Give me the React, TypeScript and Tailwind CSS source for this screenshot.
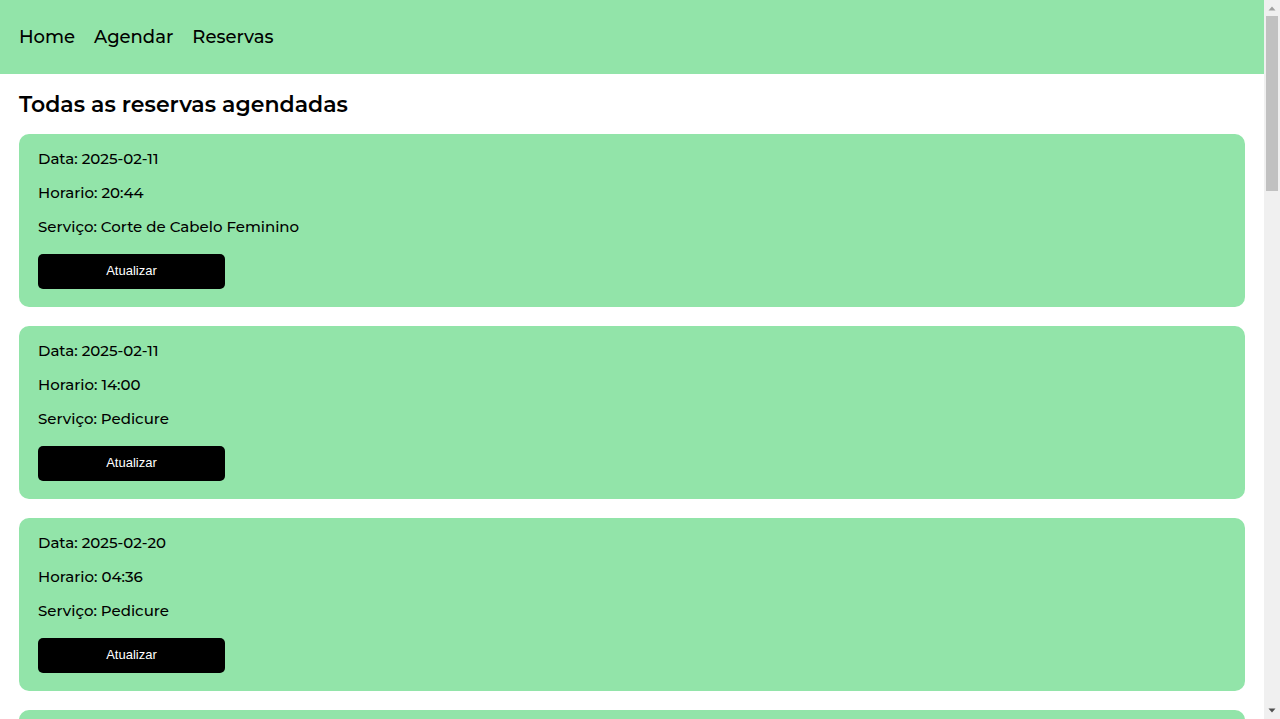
type Reserva = { id: number; data: string; horario: string; servico: string };

const reservas: Reserva[] = [
  { id: 1, data: '2025-02-11', horario: '20:44', servico: 'Corte de Cabelo Feminino' },
  { id: 2, data: '2025-02-11', horario: '14:00', servico: 'Pedicure' },
  { id: 3, data: '2025-02-20', horario: '04:36', servico: 'Pedicure' },
  { id: 4, data: '2025-02-20', horario: '10:00', servico: 'Pedicure' },
];

const links = ['Home', 'Agendar', 'Reservas'];

function Header() {
  return (
    <header className="bg-[#92e4a9] px-[19px] py-6">
      <nav className="flex gap-[19px] text-lg leading-[26px]">
        {links.map((link) => (
          <a key={link} href="#">
            {link}
          </a>
        ))}
      </nav>
    </header>
  );
}

function ReservaCard({ reserva }: { reserva: Reserva }) {
  return (
    <li className="flex flex-col items-start gap-4 rounded-[10px] bg-[#92e4a9] px-[19px] pt-4 pb-[18px] text-[15px] leading-[18px]">
      <p>Data: {reserva.data}</p>
      <p>Horario: {reserva.horario}</p>
      <p>Serviço: {reserva.servico}</p>
      <button
        type="button"
        className="mt-0.5 h-[35px] w-[187px] rounded-[5px] bg-black pb-px font-['Liberation_Sans',Arial,sans-serif] text-[13px] font-normal text-white"
      >
        Atualizar
      </button>
    </li>
  );
}

function ScrollTrack() {
  return (
    <div aria-hidden="true" className="flex w-4 shrink-0 flex-col items-center bg-[#f0f0f0]">
      <svg className="h-4 w-4 shrink-0" viewBox="0 0 16 16">
        <path d="M4.5 10.5 8 6.5l3.5 4z" fill="#a0a0a0" />
      </svg>
      <div className="h-[175px] w-3 bg-[#c1c1c1]" />
      <svg className="mt-auto h-4 w-4 shrink-0" viewBox="0 0 16 16">
        <path d="M4.5 5.5h7L8 9.5z" fill="#505050" />
      </svg>
    </div>
  );
}

export default function App() {
  return (
    <div className="flex h-screen bg-white font-[Montserrat,Inter,sans-serif] font-medium text-black">
      <div className="min-w-0 flex-1 overflow-y-auto [scrollbar-width:none]">
        <Header />
        <main className="px-[19px] py-4">
          <h1 className="text-[22px] leading-[30px] font-semibold">Todas as reservas agendadas</h1>
          <ul className="mt-3.5 flex flex-col gap-[19px]">
            {reservas.map((reserva) => (
              <ReservaCard key={reserva.id} reserva={reserva} />
            ))}
          </ul>
        </main>
      </div>
      <ScrollTrack />
    </div>
  );
}
